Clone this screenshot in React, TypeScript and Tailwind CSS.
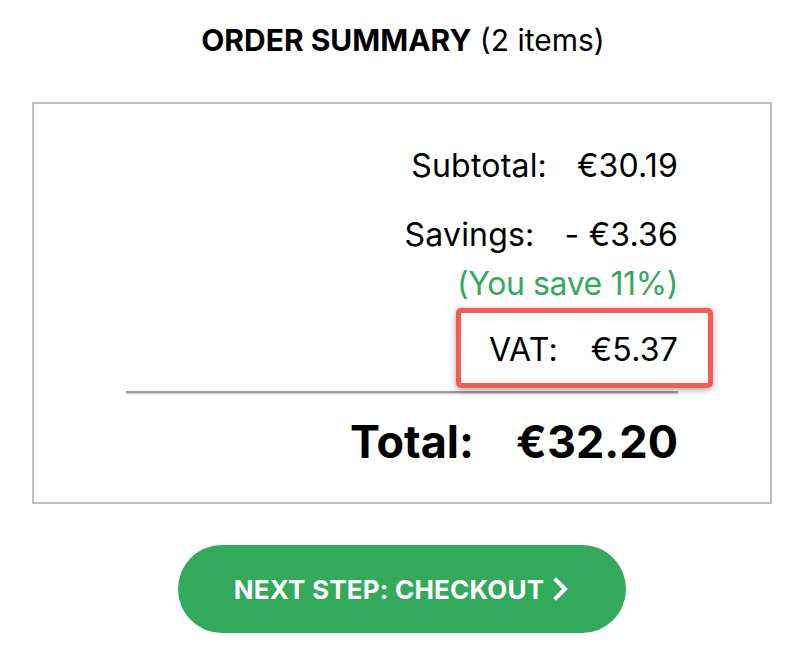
import React from 'react';

const FONT = { fontFamily: 'Inter, "Open Sans", "Liberation Sans", sans-serif' };

function Row({ label, value, className = '' }: { label: string; value: string; className?: string }) {
  return (
    <div className={`flex items-center justify-end text-[32px] leading-[36px] tracking-[0.2px] text-black ${className}`}>
      <span>{label}</span>
      <span>{value}</span>
    </div>
  );
}

export default function App() {
  return (
    <div className="w-[808px] h-[656px] bg-white flex flex-col" style={FONT}>
      <h1 className="mt-[22px] ml-[-2px] self-center text-[30px] leading-[36px] text-black">
        <span className="font-bold">ORDER SUMMARY</span> <span>(2 items)</span>
      </h1>

      <div className="mt-[44px] ml-[32px] w-[740px] h-[402px] border-2 border-[#c0c0c0] px-[92px] pt-[44px] flex flex-col items-end">
        <Row label="Subtotal:" value="€30.19" className="gap-[30px]" />
        <Row label="Savings:" value="- €3.36" className="mt-[33px] gap-[30px]" />
        <div className="text-[32px] leading-[36px] tracking-[-0.4px] text-[#35a95b] mt-[13px]">(You save 11%)</div>

        <div className="relative mt-[30px]">
          <div className="absolute -top-[24px] -bottom-[20px] -left-[33px] -right-[35px] border-[5px] border-[#f55b52] rounded-[5px] shadow-[0_2px_6px_rgba(0,0,0,0.35)]" />
          <Row label="VAT:" value="€5.37" className="gap-[33px]" />
        </div>

        <div className="mt-[23px] w-full h-[2px] bg-[#9a9a9a] shadow-[0_1px_2px_rgba(0,0,0,0.25)]" />

        <div className="mt-[25px] flex items-center justify-end gap-[42px] text-[45px] leading-[48px] font-bold text-black">
          <span>Total:</span>
          <span>€32.20</span>
        </div>
      </div>

      <button className="mt-[41px] ml-[178px] w-[448px] h-[88px] rounded-full bg-[#33a95b] text-white text-[26px] tracking-[0.2px] font-bold flex items-center justify-center gap-2">
        <span>NEXT STEP: CHECKOUT</span>
        <svg width="18" height="24" viewBox="0 0 18 24" fill="none">
          <path d="M4 3 L13 12 L4 21" stroke="white" strokeWidth="4" strokeLinecap="square" />
        </svg>
      </button>
    </div>
  );
}
